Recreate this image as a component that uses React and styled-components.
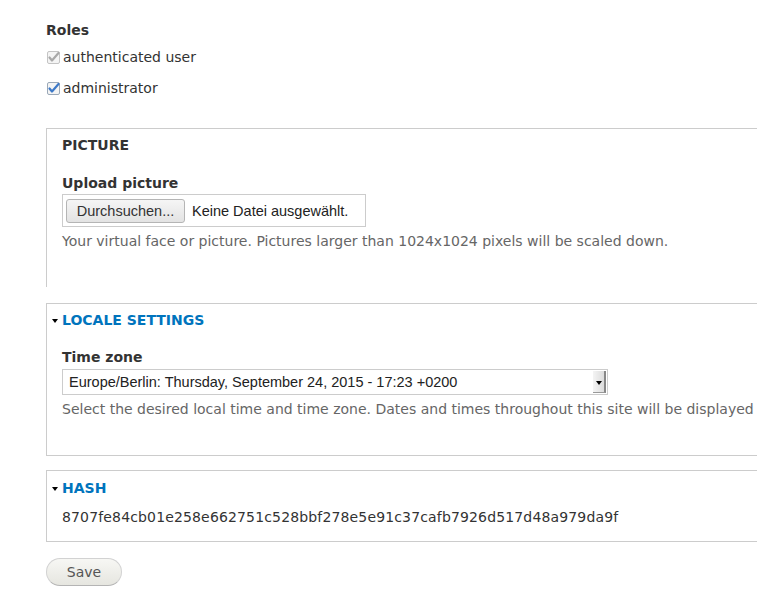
import React from 'react';
import styled, { createGlobalStyle } from 'styled-components';

const Global = createGlobalStyle`
  html, body {
    margin: 0;
    padding: 0;
    background: #fff;
    overflow: hidden;
  }
  body {
    font-family: "DejaVu Sans", Verdana, sans-serif;
    color: #333;
  }
`;

const Page = styled.div`
  width: 1000px;
  padding: 21px 0 40px 46px;
`;

const Label = styled.div`
  font-size: 14px;
  font-weight: bold;
  line-height: 18px;
  color: #333;
  margin-top: ${p => p.$top || 0}px;
`;

const CheckRow = styled.label`
  display: flex;
  align-items: center;
  gap: 3px;
  font-size: 14px;
  line-height: 18px;
  color: #333;
  margin-top: ${p => p.$top}px;
  padding-left: 1px;
`;

const Fieldset = styled.section`
  border: 1px solid #ccc;
  border-right: none;
  border-bottom: ${p => (p.$open ? 'none' : '1px solid #ccc')};
  margin-top: ${p => p.$top}px;
  padding: ${p => p.$pad};
  padding-left: 15px;
`;

const Legend = styled.div`
  display: flex;
  align-items: center;
  font-size: 14px;
  font-weight: bold;
  line-height: 18px;
  text-transform: uppercase;
  color: ${p => (p.$link ? '#0074bd' : '#333')};
  margin-left: ${p => (p.$link ? -10 : 0)}px;
  gap: 4px;
`;

const Arrow = styled.span`
  width: 0;
  height: 0;
  border-left: 3.5px solid transparent;
  border-right: 3.5px solid transparent;
  border-top: 4px solid #000;
  margin-top: 1px;
`;

const FileBox = styled.div`
  display: flex;
  align-items: center;
  width: 302px;
  height: 31px;
  border: 1px solid #ccc;
  margin-top: 2px;
  font-family: "Liberation Sans", Arial, sans-serif;
  font-size: 14.5px;
  color: #222;
`;

const FileButton = styled.span`
  margin-left: 3px;
  height: 24px;
  width: 119px;
  box-sizing: border-box;
  border: 1px solid #b5b5b5;
  border-radius: 3px;
  background: linear-gradient(#f5f5f5, #e3e3e3);
  display: flex;
  align-items: center;
  justify-content: center;
  color: #333;
  margin-right: 7px;
`;

const Description = styled.div`
  font-size: 14px;
  line-height: 18px;
  color: #666;
  margin-top: 5px;
  white-space: nowrap;
`;

const Select = styled.div`
  display: flex;
  align-items: center;
  width: 544px;
  height: 24px;
  border: 1px solid #ccc;
  margin-top: 3px;
  font-family: "Liberation Sans", Arial, sans-serif;
  font-size: 14.5px;
  color: #222;
`;

const SelectText = styled.span`
  flex: 1;
  padding-left: 6px;
`;

const SelectButton = styled.span`
  width: 13px;
  height: 22px;
  margin-right: 1px;
  box-sizing: border-box;
  border-right: 2px solid #888;
  border-bottom: 1px solid #999;
  background: linear-gradient(90deg, #f4f4f4, #dcdcdc);
  display: flex;
  align-items: center;
  justify-content: center;
  &::after {
    content: '';
    border-left: 3px solid transparent;
    border-right: 3px solid transparent;
    border-top: 4px solid #000;
    margin-top: 3px;
  }
`;

const Hash = styled.div`
  font-size: 14px;
  line-height: 18px;
  letter-spacing: 0.15px;
  color: #333;
  margin-top: 11px;
`;

const Button = styled.button`
  margin-top: 16px;
  height: 28px;
  width: 76px;
  border: 1px solid #d2d2d2;
  border-bottom-color: #b4b4b4;
  border-radius: 14px;
  background: linear-gradient(#f7f7f4, #e6e6e0);
  font-family: "DejaVu Sans", Verdana, sans-serif;
  font-size: 14px;
  color: #555;
  padding: 0;
`;

const Check = ({ color, box }) => (
  <svg width="13" height="13" viewBox="0 0 13 13">
    <rect x="0.5" y="0.5" width="12" height="12" rx="1.5" fill="#f4f4f4" stroke={box} />
    <path d="M2.5 6.5 L5 9.5 L11.5 2" fill="none" stroke={color} strokeWidth="2.2" strokeLinecap="round" strokeLinejoin="round" />
  </svg>
);

export default function App() {
  return (
    <Page>
      <Global />
      <Label>Roles</Label>
      <CheckRow $top={9}>
        <Check color="#a8a8a8" box="#c4c4c4" />
        authenticated user
      </CheckRow>
      <CheckRow $top={13}>
        <Check color="#3d79c8" box="#9aa8b8" />
        administrator
      </CheckRow>

      <Fieldset $top={31} $pad="7px 0 37px" $open>
        <Legend>Picture</Legend>
        <Label $top={20}>Upload picture</Label>
        <FileBox>
          <FileButton>Durchsuchen...</FileButton>
          Keine Datei ausgewählt.
        </FileBox>
        <Description>
          Your virtual face or picture. Pictures larger than 1024x1024 pixels will be scaled down.
        </Description>
      </Fieldset>

      <Fieldset $top={16} $pad="7px 0 37px">
        <Legend $link>
          <Arrow />
          Locale settings
        </Legend>
        <Label $top={19}>Time zone</Label>
        <Select>
          <SelectText>Europe/Berlin: Thursday, September 24, 2015 - 17:23 +0200</SelectText>
          <SelectButton />
        </Select>
        <Description>
          Select the desired local time and time zone. Dates and times throughout this site will be displayed
        </Description>
      </Fieldset>

      <Fieldset $top={14} $pad="8px 0 15px">
        <Legend $link>
          <Arrow />
          Hash
        </Legend>
        <Hash>8707fe84cb01e258e662751c528bbf278e5e91c37cafb7926d517d48a979da9f</Hash>
      </Fieldset>

      <Button>Save</Button>
    </Page>
  );
}
